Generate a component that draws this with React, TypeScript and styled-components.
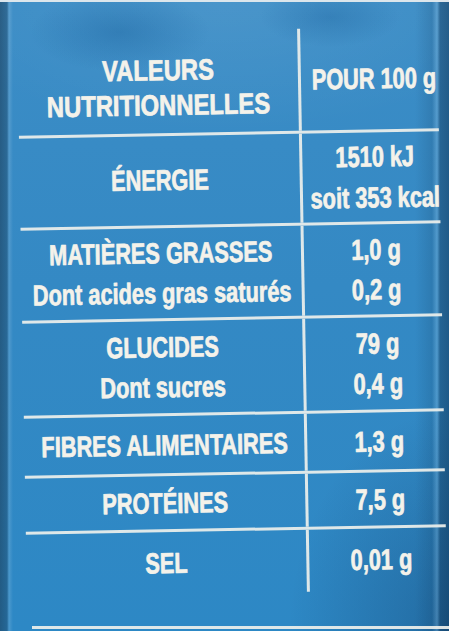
import React from "react";
import styled, { createGlobalStyle } from "styled-components";

const LINE = "rgba(238, 240, 236, 0.92)";
const INK = "#f4f2ea";

const GlobalStyle = createGlobalStyle`
  html, body {
    margin: 0;
    padding: 0;
  }
  body {
    width: 449px;
    height: 631px;
    overflow: hidden;
    background: #3489c4;
  }
`;

const Page = styled.div`
  position: relative;
  box-sizing: border-box;
  width: 449px;
  height: 631px;
  overflow: hidden;
  padding-top: 28px;
  border-top: 2px solid #dce6ec;
  background:
    linear-gradient(
      to right,
      rgba(25, 55, 80, 0.55) 0,
      rgba(25, 55, 80, 0.4) 7px,
      rgba(255, 255, 255, 0.14) 9px,
      rgba(255, 255, 255, 0) 13px,
      rgba(0, 0, 0, 0) 415px,
      rgba(10, 40, 70, 0.15) 432px,
      rgba(255, 255, 255, 0.14) 437px,
      rgba(10, 40, 70, 0.38) 440px,
      rgba(10, 40, 70, 0.48) 449px
    ),
    radial-gradient(ellipse 160px 220px at 100% 100%, rgba(10, 40, 80, 0.3), rgba(10, 40, 80, 0) 100%),
    radial-gradient(ellipse 90px 40px at 120px 30px, rgba(20, 90, 150, 0.35), rgba(20, 90, 150, 0) 100%),
    radial-gradient(ellipse 70px 30px at 330px 15px, rgba(20, 90, 150, 0.3), rgba(20, 90, 150, 0) 100%),
    radial-gradient(ellipse 300px 130px at 50% 0%, rgba(255, 255, 255, 0.07), rgba(255, 255, 255, 0) 100%),
    linear-gradient(to bottom, #3c8dc6 0%, #3489c4 45%, #2d88c5 100%);
  font-family: "Liberation Sans", Arial, sans-serif;
`;

const Table = styled.div`
  margin-left: 22px;
  width: 420px;
  transform: rotate(-1deg);
  transform-origin: 50% 50%;
`;

const Row = styled.div<{ $height: number; $first?: boolean }>`
  display: grid;
  grid-template-columns: 280px minmax(0, 1fr);
  box-sizing: border-box;
  height: ${({ $height }) => $height}px;
  border-top: ${({ $first }) => ($first ? "none" : `3px solid ${LINE}`)};
`;

const NameCell = styled.div<{ $shift?: number }>`
  display: flex;
  flex-direction: column;
  align-items: center;
  justify-content: center;
  min-width: 0;
  padding-top: ${({ $shift }) => $shift ?? 0}px;
`;

const ValueCell = styled.div`
  display: flex;
  flex-direction: column;
  align-items: center;
  justify-content: center;
  min-width: 0;
  border-left: 3px solid ${LINE};
  padding-left: 8px;
`;

const Text = styled.span<{ $scale?: number; $lh?: number }>`
  display: inline-block;
  flex-shrink: 0;
  white-space: nowrap;
  font-size: 29px;
  font-weight: 700;
  line-height: ${({ $lh }) => $lh ?? 40}px;
  color: ${INK};
  -webkit-text-stroke: 0.6px ${INK};
  text-shadow: 0 0 1px rgba(255, 255, 255, 0.45);
  transform: scaleX(${({ $scale }) => $scale ?? 0.75});
  transform-origin: 50% 50%;
`;

const FooterRule = styled.div`
  height: 3px;
  margin: 33px 0 0 32px;
  background: ${LINE};
`;

type Entry = {
  height: number;
  names: string[];
  values: string[];
  nameScale?: number;
  lh?: number;
  nameShift?: number;
};

const rows: Entry[] = [
  {
    height: 102,
    names: ["VALEURS", "NUTRITIONNELLES"],
    values: ["POUR 100 g"],
    nameScale: 0.82,
    lh: 35,
    nameShift: 12,
  },
  { height: 92, names: ["ÉNERGIE"], values: ["1510 kJ", "soit 353 kcal"], lh: 41 },
  { height: 93, names: ["MATIÈRES GRASSES", "Dont acides gras saturés"], values: ["1,0 g", "0,2 g"] },
  { height: 95, names: ["GLUCIDES", "Dont sucres"], values: ["79 g", "0,4 g"] },
  { height: 60, names: ["FIBRES ALIMENTAIRES"], values: ["1,3 g"] },
  { height: 56, names: ["PROTÉINES"], values: ["7,5 g"] },
  { height: 65, names: ["SEL"], values: ["0,01 g"] },
];

export default function App() {
  return (
    <>
      <GlobalStyle />
      <Page>
        <Table>
          {rows.map((row, i) => (
            <Row key={row.names[0]} $height={row.height} $first={i === 0}>
              <NameCell $shift={row.nameShift}>
                {row.names.map((n) => (
                  <Text key={n} $scale={row.nameScale} $lh={row.lh}>
                    {n}
                  </Text>
                ))}
              </NameCell>
              <ValueCell>
                {row.values.map((v) => (
                  <Text key={v} $lh={row.lh}>
                    {v}
                  </Text>
                ))}
              </ValueCell>
            </Row>
          ))}
        </Table>
        <FooterRule />
      </Page>
    </>
  );
}
